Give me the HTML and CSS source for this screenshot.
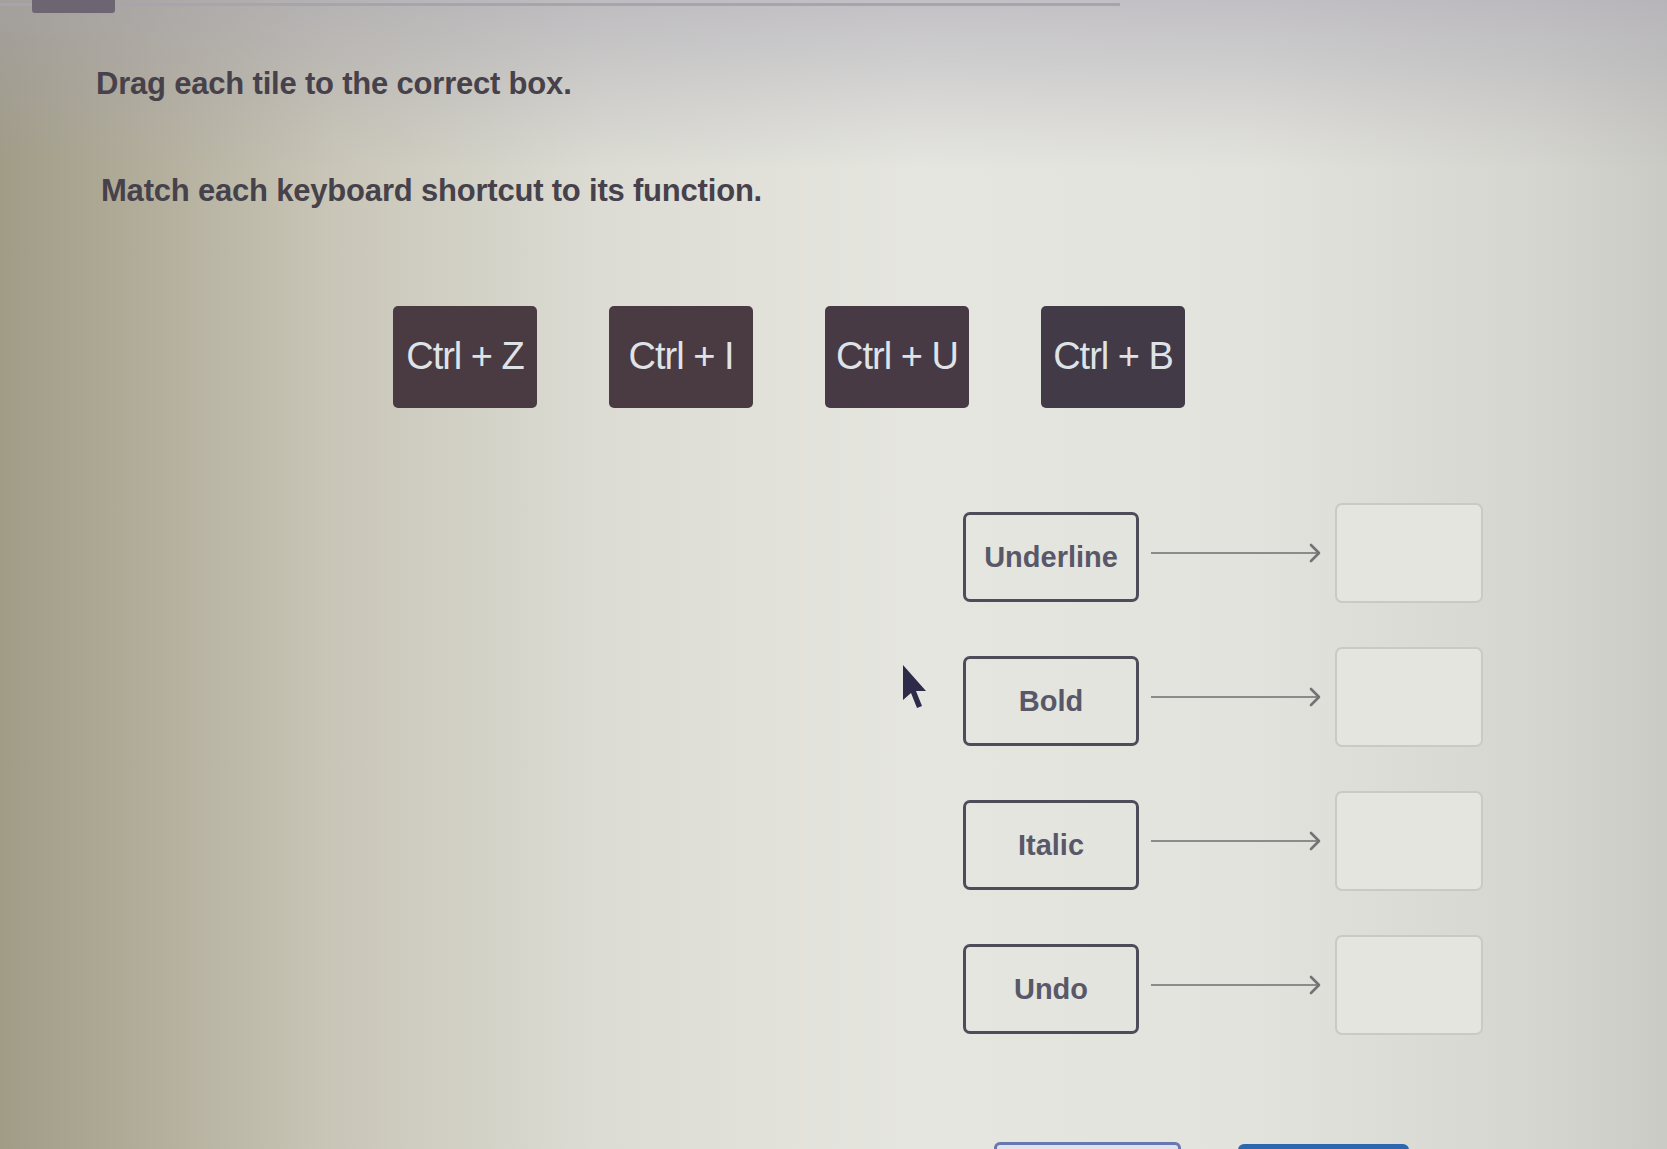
FILE: index.html
```html
<!DOCTYPE html>
<html lang="en">
<head>
<meta charset="utf-8">
<title>Drag each tile to the correct box</title>
<link rel="stylesheet" href="styles.css">
</head>
<body>
  <div class="progress"><div class="progress-fill"></div></div>

  <main class="activity">
    <p class="prompt">Drag each tile to the correct box.</p>
    <p class="question">Match each keyboard shortcut to its function.</p>

    <div class="tiles">
      <div class="tile">Ctrl + Z</div>
      <div class="tile">Ctrl + I</div>
      <div class="tile">Ctrl + U</div>
      <div class="tile">Ctrl + B</div>
    </div>

    <ul class="pairs">
      <li class="pair">
        <div class="term">Underline</div>
        <div class="arrow"><span class="arrow-line"></span><svg class="arrow-head" viewBox="0 0 12 20"><path d="M2 2 L10 10 L2 18"/></svg></div>
        <div class="drop"></div>
      </li>
      <li class="pair">
        <div class="term">Bold</div>
        <div class="arrow"><span class="arrow-line"></span><svg class="arrow-head" viewBox="0 0 12 20"><path d="M2 2 L10 10 L2 18"/></svg></div>
        <div class="drop"></div>
      </li>
      <li class="pair">
        <div class="term">Italic</div>
        <div class="arrow"><span class="arrow-line"></span><svg class="arrow-head" viewBox="0 0 12 20"><path d="M2 2 L10 10 L2 18"/></svg></div>
        <div class="drop"></div>
      </li>
      <li class="pair">
        <div class="term">Undo</div>
        <div class="arrow"><span class="arrow-line"></span><svg class="arrow-head" viewBox="0 0 12 20"><path d="M2 2 L10 10 L2 18"/></svg></div>
        <div class="drop"></div>
      </li>
    </ul>

    <div class="actions">
      <button class="btn btn-reset" type="button" aria-label="Reset"></button>
      <button class="btn btn-next" type="button" aria-label="Next"></button>
    </div>

    <svg class="pointer" viewBox="0 0 26 46" aria-hidden="true">
      <path d="M2 1 L2 36 L10 29 L16 44 L21 42 L15 27 L25 27 Z"/>
    </svg>
  </main>
</body>
</html>
```

FILE: styles.css
```css
html, body {
  margin: 0;
  height: 100%;
  overflow: hidden;
}

body {
  font-family: "Liberation Sans", Arial, sans-serif;
  color: #46414a;
  background:
    linear-gradient(180deg, rgba(165, 162, 175, 0.55) 0, rgba(200, 200, 206, 0) 170px),
    linear-gradient(90deg, #a19c86 0%, #b3ae9b 9%, #c9c6b8 20%, #dcdcd4 36%, #e6e6e0 55%, #e3e3dd 75%, #d6d6d0 92%, #cbcbc5 100%);
}

/* top progress bar */
.progress {
  height: 14px;
  padding-left: 32px;
  background: linear-gradient(180deg, transparent 3px, #a7a4ad 3px, #a7a4ad 6px, transparent 6px) no-repeat;
  background-size: 1120px 100%;
}

.progress-fill {
  width: 83px;
  height: 13px;
  background: #6d6672;
  border-radius: 0 0 3px 3px;
}

.activity {
  position: relative;
  padding-top: 52px;
}

.prompt,
.question {
  margin: 0;
  padding-left: 96px;
  font-size: 31px;
  line-height: 36px;
  font-weight: 700;
  letter-spacing: -0.2px;
}

.question {
  margin-top: 71px;
  padding-left: 101px;
}

/* shortcut tiles */
.tiles {
  display: flex;
  gap: 72px;
  margin: 97px 0 0 393px;
}

.tile {
  width: 144px;
  height: 102px;
  display: flex;
  align-items: center;
  justify-content: center;
  background: #4a3b42;
  border-radius: 5px;
  color: #dfe3e8;
  font-size: 38px;
  letter-spacing: -1px;
  padding-bottom: 2px;
  box-sizing: border-box;
}

.tiles .tile:nth-child(3) { background: #473a45; }
.tiles .tile:nth-child(4) { background: #433a47; }

/* matching rows */
.pairs {
  list-style: none;
  margin: 95px 0 0 963px;
  padding: 0;
  display: flex;
  flex-direction: column;
  gap: 44px;
}

.pair {
  display: flex;
  align-items: center;
}

.term {
  width: 176px;
  height: 90px;
  box-sizing: border-box;
  border: 3px solid #4d4c5b;
  border-radius: 7px;
  display: flex;
  align-items: center;
  justify-content: center;
  font-size: 29px;
  font-weight: 700;
  color: #585869;
  margin-top: 8px;
}

.arrow {
  width: 196px;
  display: flex;
  align-items: center;
  padding: 0 14px 0 12px;
  box-sizing: border-box;
}

.arrow-line {
  flex: 1;
  height: 2px;
  background: #8c8b8c;
  margin-right: -10px;
}

.arrow-head {
  width: 12px;
  height: 20px;
  fill: none;
  stroke: #747274;
  stroke-width: 2.6;
  stroke-linecap: round;
  stroke-linejoin: round;
}

.drop {
  width: 148px;
  height: 100px;
  box-sizing: border-box;
  border: 2px solid #c9c9c5;
  border-radius: 7px;
  background: #e5e5e0;
}

/* bottom buttons, cut off by the viewport */
.actions {
  display: flex;
  gap: 57px;
  margin: 107px 0 0 994px;
}

.btn {
  height: 48px;
  border-radius: 6px;
  padding: 0;
}

.btn-reset {
  width: 187px;
  border: 3px solid #6877b2;
  background: #dde3ee;
}

.btn-next {
  width: 171px;
  border: none;
  background: #2c68b0;
  margin-top: 2px;
}

/* mouse pointer over the page */
.pointer {
  position: absolute;
  left: 901px;
  top: 650px;
  width: 26px;
  height: 46px;
  fill: #2e2b4a;
}
```
